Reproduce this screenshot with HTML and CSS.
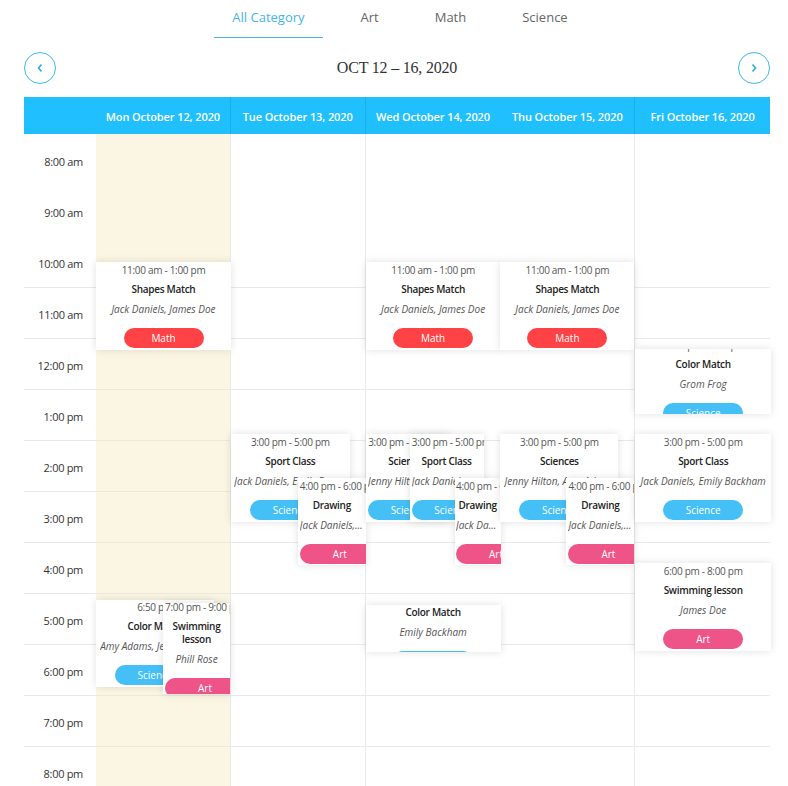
FILE: index.html
```html
<!DOCTYPE html>
<html lang="en">
<head>
    <meta charset="UTF-8">
    <title>Weekly Schedule</title>
    <link rel="stylesheet" href="styles.css">
</head>
<body>
<div class="page">
    <nav class="tabs">
        <a class="tab active">All Category</a>
        <a class="tab">Art</a>
        <a class="tab">Math</a>
        <a class="tab">Science</a>
    </nav>

    <div class="week-nav">
        <button class="circle">
            <svg width="8" height="10" viewBox="0 0 8 10"><polyline points="5.5,1.5 2.5,5 5.5,8.5"/></svg>
        </button>
        <h2 class="range">OCT 12 – 16, 2020</h2>
        <button class="circle">
            <svg width="8" height="10" viewBox="0 0 8 10"><polyline points="2.5,1.5 5.5,5 2.5,8.5"/></svg>
        </button>
    </div>

    <div class="calendar">
        <div class="cal-head">
            <div></div>
            <div class="day-name line-r">Mon October 12, 2020</div>
            <div class="day-name line-r">Tue October 13, 2020</div>
            <div class="day-name">Wed October 14, 2020</div>
            <div class="day-name line-r">Thu October 15, 2020</div>
            <div class="day-name">Fri October 16, 2020</div>
        </div>

        <div class="cal-body">
            <div class="times">
                <div class="slot">8:00 am</div>
                <div class="slot">9:00 am</div>
                <div class="slot">10:00 am</div>
                <div class="slot">11:00 am</div>
                <div class="slot">12:00 pm</div>
                <div class="slot">1:00 pm</div>
                <div class="slot">2:00 pm</div>
                <div class="slot">3:00 pm</div>
                <div class="slot">4:00 pm</div>
                <div class="slot">5:00 pm</div>
                <div class="slot">6:00 pm</div>
                <div class="slot">7:00 pm</div>
                <div class="slot">8:00 pm</div>
            </div>

            <!-- monday -->
            <div class="day today line-r">
                <div class="event" style="top:128px;left:0;width:135px;height:88px">
                    <div class="event-in">
                        <div class="ev-time">11:00 am - 1:00 pm</div>
                        <div class="ev-title">Shapes Match</div>
                        <div class="ev-who">Jack Daniels, James Doe</div>
                        <div class="ev-tag"><span class="pill math">Math</span></div>
                    </div>
                </div>
                <div class="event" style="top:466px;left:0;width:118px;height:87px">
                    <div class="event-in" style="margin-top:-1px">
                        <div class="ev-time">6:50 pm</div>
                        <div class="ev-title">Color Match</div>
                        <div class="ev-who">Amy Adams, Jenny Hilton</div>
                        <div class="ev-tag"><span class="pill science">Science</span></div>
                    </div>
                </div>
                <div class="event" style="top:469px;left:67px;width:67px;height:91px">
                    <div class="event-in" style="margin-top:-4px">
                        <div class="ev-time">7:00 pm - 9:00 pm</div>
                        <div class="ev-title">Swimming lesson</div>
                        <div class="ev-who">Phill Rose</div>
                        <div class="ev-tag"><span class="pill art">Art</span></div>
                    </div>
                </div>
            </div>

            <!-- tuesday -->
            <div class="day line-r">
                <div class="event" style="top:300px;left:0;width:119px;height:88px">
                    <div class="event-in">
                        <div class="ev-time">3:00 pm - 5:00 pm</div>
                        <div class="ev-title">Sport Class</div>
                        <div class="ev-who">Jack Daniels, Emily Backham</div>
                        <div class="ev-tag"><span class="pill science">Science</span></div>
                    </div>
                </div>
                <div class="event" style="top:344px;left:67px;width:68px;height:87px">
                    <div class="event-in">
                        <div class="ev-time">4:00 pm - 6:00 pm</div>
                        <div class="ev-title">Drawing</div>
                        <div class="ev-who">Jack Daniels, Emily Backham</div>
                        <div class="ev-tag"><span class="pill art">Art</span></div>
                    </div>
                </div>
            </div>

            <!-- wednesday -->
            <div class="day">
                <div class="event" style="top:128px;left:0;width:135px;height:88px">
                    <div class="event-in">
                        <div class="ev-time">11:00 am - 1:00 pm</div>
                        <div class="ev-title">Shapes Match</div>
                        <div class="ev-who">Jack Daniels, James Doe</div>
                        <div class="ev-tag"><span class="pill math">Math</span></div>
                    </div>
                </div>
                <div class="event" style="top:300px;left:0;width:84px;height:88px">
                    <div class="event-in">
                        <div class="ev-time">3:00 pm - 5:00 pm</div>
                        <div class="ev-title">Sciences</div>
                        <div class="ev-who">Jenny Hilton, Amy Adams</div>
                        <div class="ev-tag"><span class="pill science">Science</span></div>
                    </div>
                </div>
                <div class="event" style="top:300px;left:44px;width:74px;height:88px">
                    <div class="event-in">
                        <div class="ev-time">3:00 pm - 5:00 pm</div>
                        <div class="ev-title">Sport Class</div>
                        <div class="ev-who">Jack Daniels, Emily Backham</div>
                        <div class="ev-tag"><span class="pill science">Science</span></div>
                    </div>
                </div>
                <div class="event" style="top:344px;left:89px;width:46px;height:87px">
                    <div class="event-in">
                        <div class="ev-time">4:00 pm - 6:00 pm</div>
                        <div class="ev-title">Drawing</div>
                        <div class="ev-who">Jack Daniels, Emily Backham</div>
                        <div class="ev-tag"><span class="pill art">Art</span></div>
                    </div>
                </div>
                <div class="event" style="top:471px;left:0;width:135px;height:47px">
                    <div class="event-in" style="margin-top:-20px">
                        <div class="ev-time">5:00 pm - 6:00 pm</div>
                        <div class="ev-title">Color Match</div>
                        <div class="ev-who">Emily Backham</div>
                        <div class="ev-tag"><span class="pill science">Science</span></div>
                    </div>
                </div>
            </div>

            <!-- thursday -->
            <div class="day line-r">
                <div class="event" style="top:128px;left:0;width:134px;height:88px">
                    <div class="event-in">
                        <div class="ev-time">11:00 am - 1:00 pm</div>
                        <div class="ev-title">Shapes Match</div>
                        <div class="ev-who">Jack Daniels, James Doe</div>
                        <div class="ev-tag"><span class="pill math">Math</span></div>
                    </div>
                </div>
                <div class="event" style="top:300px;left:0;width:118px;height:88px">
                    <div class="event-in">
                        <div class="ev-time">3:00 pm - 5:00 pm</div>
                        <div class="ev-title">Sciences</div>
                        <div class="ev-who">Jenny Hilton, Amy Adams</div>
                        <div class="ev-tag"><span class="pill science">Science</span></div>
                    </div>
                </div>
                <div class="event" style="top:344px;left:66px;width:68px;height:87px">
                    <div class="event-in">
                        <div class="ev-time">4:00 pm - 6:00 pm</div>
                        <div class="ev-title">Drawing</div>
                        <div class="ev-who">Jack Daniels, Emily Backham</div>
                        <div class="ev-tag"><span class="pill art">Art</span></div>
                    </div>
                </div>
            </div>

            <!-- friday -->
            <div class="day">
                <div class="event" style="top:215px;left:0;width:136px;height:65px">
                    <div class="event-in" style="margin-top:-12px">
                        <div class="ev-time">12:00 pm - 1:00 pm</div>
                        <div class="ev-title">Color Match</div>
                        <div class="ev-who">Grom Frog</div>
                        <div class="ev-tag"><span class="pill science">Science</span></div>
                    </div>
                </div>
                <div class="event" style="top:300px;left:0;width:136px;height:88px">
                    <div class="event-in">
                        <div class="ev-time">3:00 pm - 5:00 pm</div>
                        <div class="ev-title">Sport Class</div>
                        <div class="ev-who">Jack Daniels, Emily Backham</div>
                        <div class="ev-tag"><span class="pill science">Science</span></div>
                    </div>
                </div>
                <div class="event" style="top:429px;left:0;width:136px;height:88px">
                    <div class="event-in">
                        <div class="ev-time">6:00 pm - 8:00 pm</div>
                        <div class="ev-title">Swimming lesson</div>
                        <div class="ev-who">James Doe</div>
                        <div class="ev-tag"><span class="pill art">Art</span></div>
                    </div>
                </div>
            </div>
        </div>
    </div>
</div>
</body>
</html>
```

FILE: styles.css
```css
* {
    box-sizing: border-box;
}

body {
    margin: 0;
    background: #fff;
    color: #333;
    font-family: "Open Sans", "Noto Sans", sans-serif;
}

.page {
    margin: 0 18px 0 24px;
}

/* category tabs */
.tabs {
    display: flex;
    justify-content: center;
    gap: 20px;
    padding-left: 6px;
}

.tab {
    padding: 7px 18px 10px;
    line-height: 20px;
    font-size: 13px;
    color: #666;
    border-bottom: 1px solid transparent;
    cursor: pointer;
}

.tab.active {
    color: #44b4ec;
    border-bottom-color: #4cb3e6;
}

/* week switcher */
.week-nav {
    display: flex;
    align-items: center;
    justify-content: space-between;
    height: 32px;
    margin-top: 14px;
}

.circle {
    width: 32px;
    height: 32px;
    padding: 0;
    border: 1px solid #3db7ef;
    border-radius: 50%;
    background: #fff;
    display: flex;
    align-items: center;
    justify-content: center;
}

.circle polyline {
    fill: none;
    stroke: #2aaee8;
    stroke-width: 1.6;
}

.range {
    margin: 0;
    font-family: "Liberation Serif", serif;
    font-weight: normal;
    font-size: 16px;
    letter-spacing: -0.2px;
    color: #333;
}

/* calendar */
.calendar {
    margin-top: 13px;
}

.cal-head,
.cal-body {
    display: grid;
    grid-template-columns: 72px repeat(5, 1fr);
}

.cal-head {
    height: 37px;
    background: #20bffe;
}

.day-name {
    padding-top: 2px;
    color: #fff;
    font-size: 11px;
    font-weight: 600;
    letter-spacing: -0.1px;
    line-height: 35px;
    text-align: center;
    white-space: nowrap;
}

.day-name.line-r {
    border-right: 1px solid #19afe6;
}

.cal-body {
    background-image: repeating-linear-gradient(to bottom, transparent 0 50px, #e9e9e9 50px 51px);
    background-size: 100% calc(100% - 103px);
    background-position: 0 103px;
    background-repeat: no-repeat;
}

.slot {
    height: 51px;
    padding: 20px 13px 0 0;
    line-height: 16px;
    font-size: 11px;
    letter-spacing: -0.3px;
    color: #333;
    text-align: right;
}

.day {
    position: relative;
}

.day.line-r {
    border-right: 1px solid #e9e9e9;
}

.day.today {
    background-color: #fbf6e3;
    background-image: repeating-linear-gradient(to bottom, transparent 0 50px, #ebe8dc 50px 51px);
    background-size: 100% calc(100% - 103px);
    background-position: 0 103px;
    background-repeat: no-repeat;
}

/* event cards */
.event {
    position: absolute;
    background: #fff;
    box-shadow: 0 0 8px rgba(0, 0, 0, 0.12);
    overflow: hidden;
    text-align: center;
}

.event-in {
    padding: 0 3% 2px;
}

.ev-time {
    font-size: 10px;
    letter-spacing: -0.3px;
    line-height: 16px;
    color: #555;
    white-space: nowrap;
}

.ev-title {
    margin: 5px 0 5px;
    font-size: 10px;
    letter-spacing: -0.3px;
    line-height: 13px;
    font-weight: 600;
    color: #222;
}

.ev-who {
    font-size: 10px;
    line-height: 16px;
    font-style: italic;
    color: #555;
    white-space: nowrap;
    overflow: hidden;
    text-overflow: ellipsis;
}

.ev-tag {
    margin-top: 11px;
    height: 20px;
    line-height: 20px;
    font-size: 10px;
    white-space: nowrap;
}

.pill {
    display: inline-block;
    vertical-align: top;
    width: 80px;
    height: 20px;
    border-radius: 10px;
    color: #fff;
}

.pill.math {
    background: #fe4245;
}

.pill.science {
    background: #45c0f6;
}

.pill.art {
    background: #ef5488;
}
```
